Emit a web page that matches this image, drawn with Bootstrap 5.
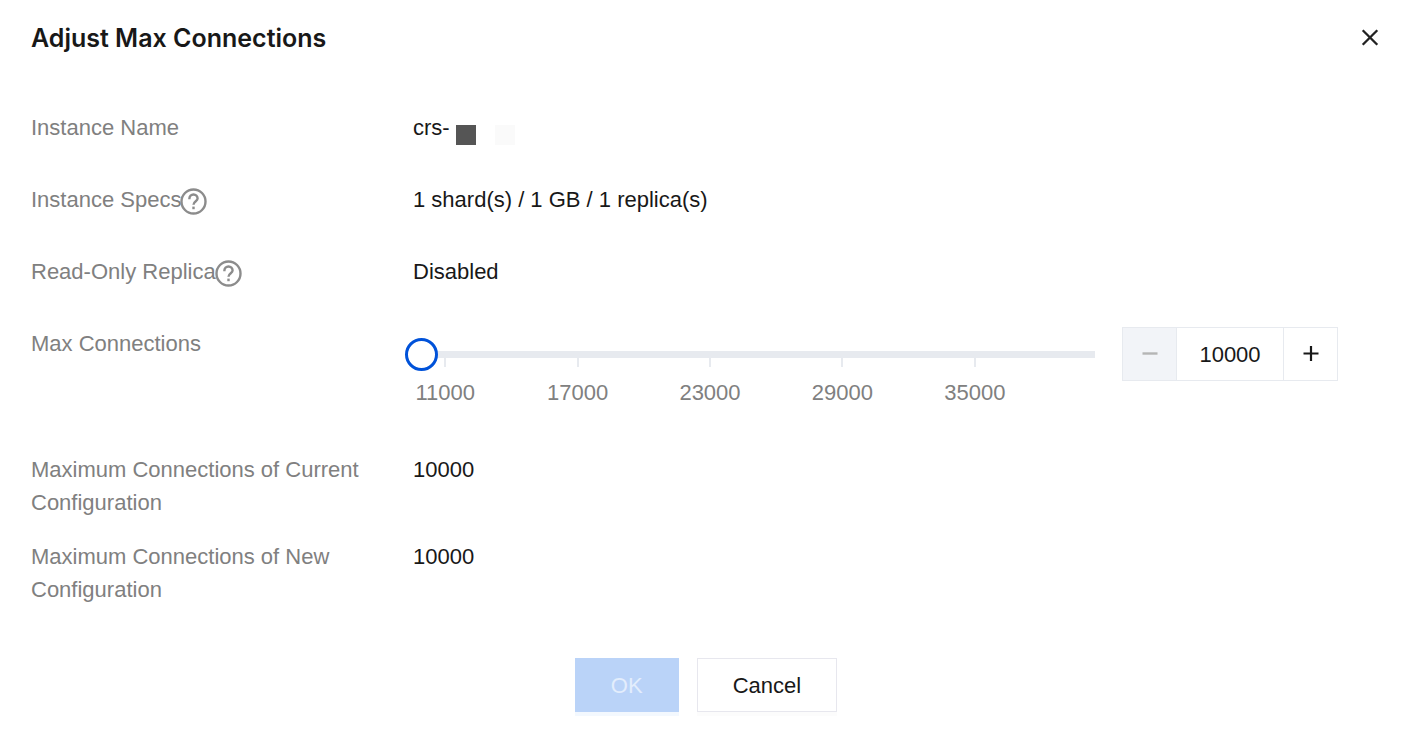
<!DOCTYPE html>
<html lang="en">
<head>
<meta charset="utf-8">
<meta name="viewport" content="width=device-width, initial-scale=1">
<title>Adjust Max Connections</title>
<link rel="stylesheet" href="https://cdn.jsdelivr.net/npm/bootstrap@5.3.0/dist/css/bootstrap.min.css">
<style>
  body { font-family: "Liberation Sans", Arial, sans-serif; font-size: 22px; line-height: 33px; color: #181818; }
  .dialog-page { padding: 20px 39px 14px 31px; }
  .dialog-title { font: 600 25px/36px Inter, sans-serif; color: #181818; }
  .dialog-close { width: 20px; height: 20px; color: #222; }
  .dialog-close svg, .step-btn svg, .help-btn svg { display: block; }
  .field-list { padding-top: 55px; }
  .field { display: flex; min-height: 51px; margin-bottom: 21px; }
  .field-label { flex: 0 0 382px; padding-right: 40px; color: #808080; }
  .field-value { flex: 1 1 0; min-width: 0; margin: 0; }
  .help-btn { width: 27px; height: 27px; color: #8c8c8c; margin-top: 5px; margin-left: -1px; }
  .redacted { width: 20px; height: 20px; margin-top: 14px; }
  .redacted-dark { background: #555; margin-left: 6px; }
  .redacted-light { background: #fafafa; margin-left: 19px; }

  .connections { gap: 27px; padding: 0 43px 23px 0; }
  .slider { flex: 1 1 0; min-width: 0; margin: 11px 0 0 -8px; }
  .slider-input { display: block; width: 100%; height: 32px; margin: 0; background: transparent; -webkit-appearance: none; appearance: none; }
  .slider-input::-webkit-slider-runnable-track { height: 7px; background: linear-gradient(#e7eaef, #e7eaef) 12px 0 no-repeat; }
  .slider-input::-webkit-slider-thumb { -webkit-appearance: none; width: 33px; height: 33px; margin-top: -13px; border: 3px solid #0052d9; border-radius: 50%; background: #fff; }
  .slider-input::-moz-range-track { height: 7px; background: #e7eaef; }
  .slider-input::-moz-range-thumb { width: 27px; height: 27px; border: 3px solid #0052d9; border-radius: 50%; background: #fff; }
  .slider-scale { display: grid; grid-template-columns: repeat(5, 1fr); margin: -12px 54px 0 -26px; color: #808080; text-align: center; pointer-events: none; }
  .slider-scale span::before { content: ""; display: block; width: 2px; height: 9px; margin: 0 auto 9px; background: #e7eaef; }

  .stepper { width: 216px; height: 54px; border: 1px solid #e7eaef; }
  .step-btn { width: 53px; display: grid; place-items: center; padding: 0; border: 0; background: #fff; color: #181818; }
  .step-btn:disabled { background: #f2f4f8; color: #b5b5b5; }
  .step-value { flex: 1 1 0; min-width: 0; padding: 0; border: solid #e7eaef; border-width: 0 1px; text-align: center; color: #181818; }

  .actions { gap: 18px; padding-top: 31px; }
  .action { height: 54px; padding: 0 35px; border: 1px solid #e7e7ee; border-radius: 0; font-size: 22px; line-height: 33px; color: #181818; background: #fff; box-shadow: 0 4px 0 #fcfcfc; }
  .action-ok:disabled { background: #bad3f8; border-color: #bad3f8; color: #e3edfc; opacity: 1; box-shadow: 0 4px 0 #f3f8fe; }
</style>
</head>
<body>
<main class="dialog-page">
  <header class="d-flex justify-content-between align-items-center">
    <h1 class="dialog-title m-0">Adjust Max Connections</h1>
    <button type="button" class="dialog-close btn p-0 border-0" aria-label="Close">
      <svg width="20" height="20" viewBox="0 0 20 20" fill="none" stroke="currentColor" stroke-width="2.3"><path d="M1.7 2.2 16.3 16.8M16.3 2.2 1.7 16.8"/></svg>
    </button>
  </header>

  <form class="field-list">
    <div class="field">
      <div class="field-label">Instance Name</div>
      <div class="field-value d-flex align-items-start">crs-<span class="redacted redacted-dark"></span><span class="redacted redacted-light"></span></div>
    </div>
    <div class="field">
      <div class="field-label d-flex align-items-start">Instance Specs<button type="button" class="help-btn btn p-0 border-0" aria-label="About instance specs">
        <svg width="27" height="27" viewBox="0 0 27 27" fill="none" stroke="currentColor" stroke-width="2.4"><circle cx="13.5" cy="13.5" r="12"/><path d="M9.4 11.2V10.6A4.1 4.1 0 0 1 17.6 10.6C17.6 13.2 13.5 13.4 13.5 16.8"/><path d="M13.5 18.6V21.2"/></svg>
      </button></div>
      <div class="field-value">1 shard(s) / 1 GB / 1 replica(s)</div>
    </div>
    <div class="field">
      <div class="field-label d-flex align-items-start">Read-Only Replica<button type="button" class="help-btn btn p-0 border-0" aria-label="About read-only replica">
        <svg width="27" height="27" viewBox="0 0 27 27" fill="none" stroke="currentColor" stroke-width="2.4"><circle cx="13.5" cy="13.5" r="12"/><path d="M9.4 11.2V10.6A4.1 4.1 0 0 1 17.6 10.6C17.6 13.2 13.5 13.4 13.5 16.8"/><path d="M13.5 18.6V21.2"/></svg>
      </button></div>
      <div class="field-value">Disabled</div>
    </div>
    <div class="field">
      <label class="field-label" for="connections">Max Connections</label>
      <div class="field-value connections d-flex align-items-start">
        <div class="slider">
          <input class="slider-input" type="range" id="connections" min="10000" max="40000" step="1000" value="10000">
          <div class="slider-scale"><span>11000</span><span>17000</span><span>23000</span><span>29000</span><span>35000</span></div>
        </div>
        <div class="stepper d-flex">
          <button type="button" class="step-btn" disabled aria-label="Decrease"><svg width="16" height="16" viewBox="0 0 16 16" stroke="currentColor" stroke-width="2.4"><path d="M.5 7.5H15.5"/></svg></button>
          <input class="step-value" type="text" value="10000" aria-label="Max connections value">
          <button type="button" class="step-btn" aria-label="Increase"><svg width="16" height="16" viewBox="0 0 16 16" stroke="currentColor" stroke-width="2.2"><path d="M.5 7.5H15.5M8 0V15"/></svg></button>
        </div>
      </div>
    </div>
    <div class="field">
      <div class="field-label">Maximum Connections of Current Configuration</div>
      <div class="field-value">10000</div>
    </div>
    <div class="field">
      <div class="field-label">Maximum Connections of New Configuration</div>
      <div class="field-value">10000</div>
    </div>
    <div class="actions d-flex justify-content-center">
      <button type="submit" class="action action-ok btn" disabled>OK</button>
      <button type="button" class="action btn">Cancel</button>
    </div>
  </form>
</main>
<script src="https://cdn.jsdelivr.net/npm/bootstrap@5.3.0/dist/js/bootstrap.bundle.min.js"></script>
</body>
</html>
